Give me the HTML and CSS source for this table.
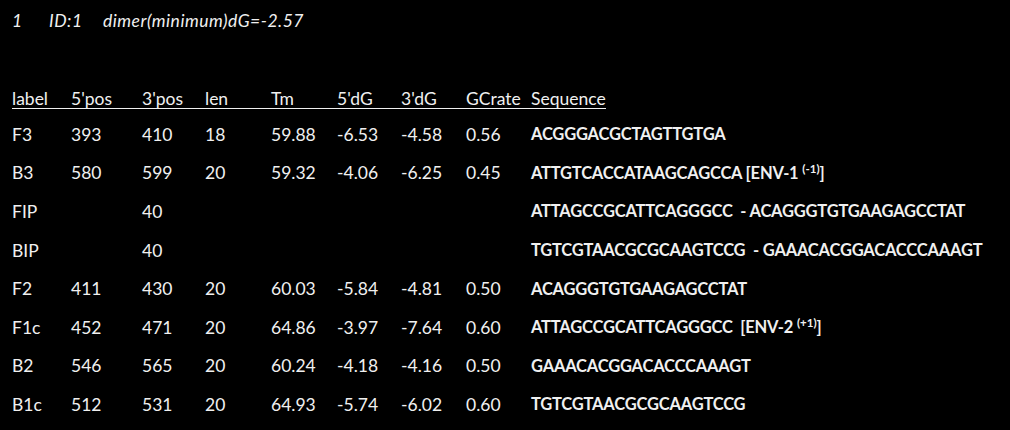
FILE: index.html
```html
<!DOCTYPE html>
<html>
<head>
<meta charset="utf-8">
<link rel="stylesheet" href="styles.css">
</head>
<body>
<div class="page">
  <div class="title">
    <span class="t-num">1</span>
    <span class="t-id">ID:1</span>
    <span class="t-dimer">dimer(minimum)dG=-2.57</span>
  </div>
  <div class="row head">
    <span>label</span><span>5'pos</span><span>3'pos</span><span>len</span><span>Tm</span><span>5'dG</span><span>3'dG</span><span>GCrate</span><span>Sequence</span>
  </div>
  <div class="rows">
    <div class="row"><span>F3</span><span>393</span><span>410</span><span>18</span><span>59.88</span><span>-6.53</span><span>-4.58</span><span>0.56</span><span class="seq">ACGGGACGCTAGTTGTGA</span></div>
    <div class="row"><span>B3</span><span>580</span><span>599</span><span>20</span><span>59.32</span><span>-4.06</span><span>-6.25</span><span>0.45</span><span class="seq">ATTGTCACCATAAGCAGCCA [ENV-1 <sup>(-1)</sup>]</span></div>
    <div class="row"><span>FIP</span><span></span><span>40</span><span></span><span></span><span></span><span></span><span></span><span class="seq">ATTAGCCGCATTCAGGGCC  - ACAGGGTGTGAAGAGCCTAT</span></div>
    <div class="row"><span>BIP</span><span></span><span>40</span><span></span><span></span><span></span><span></span><span></span><span class="seq">TGTCGTAACGCGCAAGTCCG  - GAAACACGGACACCCAAAGT</span></div>
    <div class="row"><span>F2</span><span>411</span><span>430</span><span>20</span><span>60.03</span><span>-5.84</span><span>-4.81</span><span>0.50</span><span class="seq">ACAGGGTGTGAAGAGCCTAT</span></div>
    <div class="row"><span>F1c</span><span>452</span><span>471</span><span>20</span><span>64.86</span><span>-3.97</span><span>-7.64</span><span>0.60</span><span class="seq">ATTAGCCGCATTCAGGGCC  [ENV-2 <sup>(+1)</sup>]</span></div>
    <div class="row"><span>B2</span><span>546</span><span>565</span><span>20</span><span>60.24</span><span>-4.18</span><span>-4.16</span><span>0.50</span><span class="seq">GAAACACGGACACCCAAAGT</span></div>
    <div class="row"><span>B1c</span><span>512</span><span>531</span><span>20</span><span>64.93</span><span>-5.74</span><span>-6.02</span><span>0.60</span><span class="seq">TGTCGTAACGCGCAAGTCCG</span></div>
  </div>
</div>
</body>
</html>
```

FILE: styles.css
```css
html, body {
  margin: 0;
  padding: 0;
  background: #000;
}
body {
  width: 1010px;
  height: 430px;
  overflow: hidden;
  color: #f0f0f0;
  font-family: "Lato", "Liberation Sans", sans-serif;
  font-size: 17.5px;
}
.page {
  padding-left: 12px;
}
.title {
  display: flex;
  font-style: italic;
  line-height: 20px;
  padding-top: 11px;
  letter-spacing: 0.5px;
}
.t-num { width: 37px; }
.t-id { width: 54px; }
.row {
  display: grid;
  grid-template-columns: 59px 71px 63px 66px 66px 64px 65px 65px auto;
  align-items: center;
  white-space: pre;
}
.head {
  width: max-content;
  line-height: 18px;
  margin-top: 59px;
  border-bottom: 1px solid #f0f0f0;
}
.rows {
  margin-top: 6px;
}
.rows .row {
  height: 38.6px;
}
.seq {
  font-weight: 700;
  font-size: 16.5px;
  letter-spacing: -0.2px;
}
sup {
  font-size: 11.5px;
  line-height: 0;
  vertical-align: 6px;
  letter-spacing: 0;
}
```
